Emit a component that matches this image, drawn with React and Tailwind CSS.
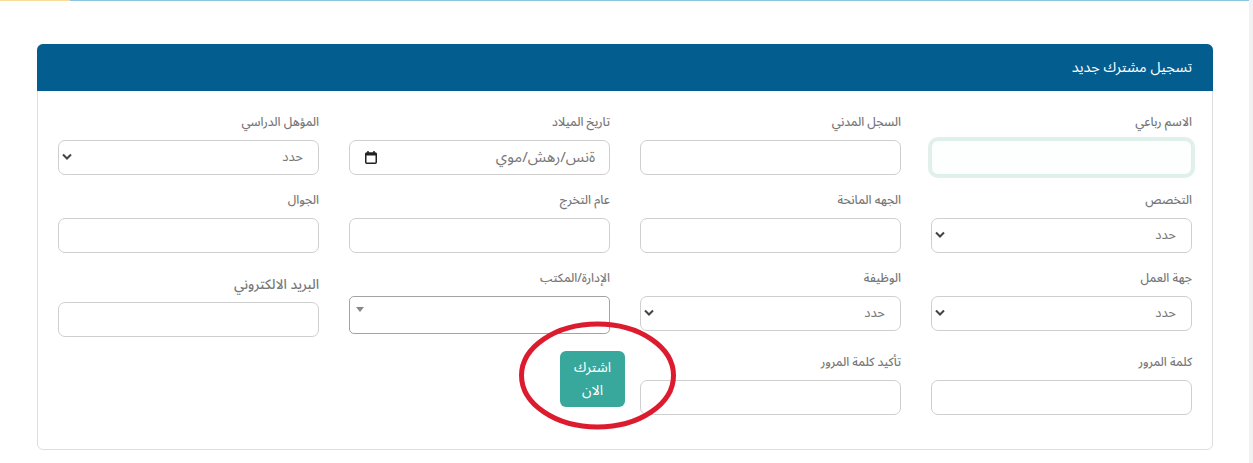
const fontStack = { fontFamily: '"Noto Sans Arabic", "DejaVu Sans", "Noto Sans", sans-serif' };

function Label({ children, big }) {
  return (
    <label className={big ? "block h-[18px] mt-[6px] mb-[9px] text-[13.5px] leading-[20px] font-medium text-[#777]" : "block h-[18px] mb-[9px] text-[12px] leading-[20px] font-medium text-[#777]"}>
      {children}
    </label>
  );
}

function TextField({ label, big, focused, type = "text" }) {
  return (
    <div>
      <Label big={big}>{label}</Label>
      <input
        type={type}
        className={focused
          ? "block w-full h-[35px] rounded-[7px] border border-[#dcefe8] bg-[#fdfefe] outline-none shadow-[0_0_0_3px_#e1f0ea]"
          : "block w-full h-[35px] rounded-[7px] border border-[#cfcfcf] bg-white outline-none"}
      />
    </div>
  );
}

function Chevron() {
  return (
    <svg className="absolute left-[4px] top-[13px] pointer-events-none" width="10" height="8" viewBox="0 0 10 8" fill="none">
      <path d="M1 1.5 5 5.5 9 1.5" stroke="#444" strokeWidth="2" />
    </svg>
  );
}

function SelectField({ label }) {
  return (
    <div>
      <Label>{label}</Label>
      <div className="relative">
        <select className="block w-full h-[35px] appearance-none rounded-[7px] border border-[#cfcfcf] bg-white pr-[15px] pl-[24px] text-[13px] text-[#777] outline-none">
          <option>حدد</option>
        </select>
        <Chevron />
      </div>
    </div>
  );
}

function DateField({ label }) {
  return (
    <div>
      <Label>{label}</Label>
      <div className="flex items-center justify-between h-[35px] rounded-[7px] border border-[#cfcfcf] bg-white pr-[14px] pl-[15px]">
        <span className="text-[15px] text-[#777]">ةنس/رهش/موي</span>
        <svg width="12" height="13" viewBox="0 0 12 13" fill="none">
          <rect x="0.75" y="2" width="10.5" height="10.25" rx="1" stroke="#222" strokeWidth="1.5" />
          <rect x="0.75" y="2" width="10.5" height="2.5" fill="#222" />
          <path d="M3 0v2M9 0v2" stroke="#222" strokeWidth="1.5" />
        </svg>
      </div>
    </div>
  );
}

function OfficeField({ label }) {
  return (
    <div>
      <Label>{label}</Label>
      <div className="relative h-[38px] rounded-[5px] border border-[#a3a3a3] bg-white">
        <span className="absolute left-[6px] top-[10px] w-0 h-0 border-x-[4px] border-x-transparent border-t-[5px] border-t-[#888]" />
      </div>
    </div>
  );
}

export default function App() {
  return (
    <div dir="rtl" style={fontStack} className="relative h-[463px] overflow-hidden bg-white border-r-[4px] border-r-[#f1f1f1]">
      <div className="flex h-px">
        <div className="flex-1 bg-[#8cc6dc]" />
        <div className="w-[70px] bg-[#f6dc98]" />
      </div>

      <section className="ml-[37px] mr-[36px] mt-[43px] h-[406px] rounded-[6px] border border-[#dedede] bg-white">
        <header className="flex items-center h-[47px] -mx-px -mt-px rounded-t-[6px] bg-[#045d8f] pr-[21px] text-[14.4px] text-white">
          تسجيل مشترك جديد
        </header>

        <div className="grid grid-cols-4 gap-x-[30px] px-[20px] pt-[22px] [grid-template-rows:78px_78px_84px_auto]">
          <TextField label="الاسم رباعي" focused />
          <TextField label="السجل المدني" />
          <DateField label="تاريخ الميلاد" />
          <SelectField label="المؤهل الدراسي" />

          <SelectField label="التخصص" />
          <TextField label="الجهه المانحة" />
          <TextField label="عام التخرج" />
          <TextField label="الجوال" />

          <SelectField label="جهة العمل" />
          <SelectField label="الوظيفة" />
          <OfficeField label="الإدارة/المكتب" />
          <TextField label="البريد الالكتروني" big />

          <TextField label="كلمة المرور" type="password" />
          <TextField label="تأكيد كلمة المرور" type="password" />
          <div className="flex justify-start">
            <button className="w-[65px] h-[56px] -mt-[2px] -mr-[15px] rounded-[6px] bg-[#38a89d] px-[10px] text-[14px] leading-[23px] text-white">
              اشترك الان
            </button>
          </div>
        </div>
      </section>

      <svg className="absolute left-[517px] top-[319px] pointer-events-none" width="160" height="112" viewBox="0 0 160 112" fill="none">
        <ellipse cx="80.5" cy="56.5" rx="76" ry="51.5" stroke="#dc1c2e" strokeWidth="5" />
      </svg>
    </div>
  );
}
